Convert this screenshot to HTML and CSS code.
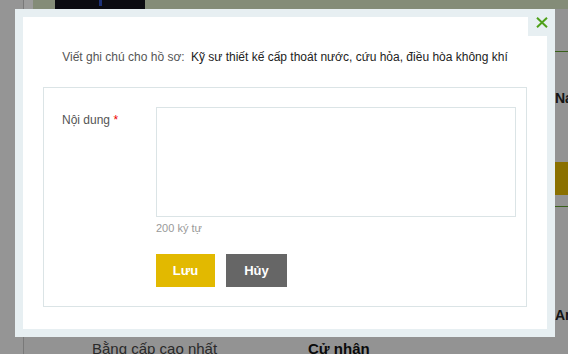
FILE: index.html
```html
<!DOCTYPE html>
<html lang="vi">
<head>
    <meta charset="UTF-8">
    <meta name="viewport" content="width=device-width, initial-scale=1.0">
    <title>Viết ghi chú cho hồ sơ</title>
    <link rel="stylesheet" href="styles.css">
</head>
<body>
    <div class="page">
        <aside class="sidebar"></aside>
        <div class="main">
            <div class="hero">
                <div class="avatar"><span class="avatar-dot"></span></div>
            </div>
            <div class="profile">
                <div class="profile-left">
                    <div class="info-row">
                        <span class="info-label">Bằng cấp cao nhất</span>
                        <span class="info-value">Cử nhân</span>
                    </div>
                </div>
                <div class="profile-right">
                    <div class="rule rule-top"></div>
                    <div class="side-name">Nam</div>
                    <div class="side-btn"></div>
                    <div class="rule"></div>
                    <div class="side-name side-bottom">Anh</div>
                </div>
            </div>
        </div>
    </div>

    <div class="overlay"></div>

    <div class="modal">
        <button class="modal-close" type="button" aria-label="Đóng">
            <svg width="12" height="11" viewBox="0 0 12 11">
                <path d="M1 0.8 L11 10.2 M11 0.8 L1 10.2" stroke="currentColor" stroke-width="2" fill="none"/>
            </svg>
        </button>
        <p class="modal-title">
            <span class="modal-label">Viết ghi chú cho hồ sơ:</span>
            <span class="modal-job">Kỹ sư thiết kế cấp thoát nước, cứu hỏa, điều hòa không khí</span>
        </p>
        <form class="note-form">
            <label class="note-label" for="note">Nội dung <span class="req">*</span></label>
            <div class="note-field">
                <textarea id="note" class="note-input"></textarea>
                <div class="note-hint">200 ký tự</div>
                <div class="note-actions">
                    <button type="button" class="btn btn-save">Lưu</button>
                    <button type="button" class="btn btn-cancel">Hủy</button>
                </div>
            </div>
        </form>
    </div>
</body>
</html>
```

FILE: styles.css
```css
body, html {
    margin: 0;
    padding: 0;
    height: 100%;
    overflow: hidden;
    font-family: "Liberation Sans", Arial, sans-serif;
}

.page {
    display: flex;
    height: 100%;
    background: #f2f2f2;
}

.sidebar {
    flex-shrink: 0;
    width: 23px;
    background: #f0f0f0;
    border-right: 1px solid #c4c4c4;
}

.main {
    flex: 1;
    min-width: 0;
    display: flex;
    flex-direction: column;
    background: #fcfcfc;
}

.hero {
    height: 9px;
    margin-left: 9px;
    padding-left: 22px;
    background: #d6e2c2;
}

.avatar {
    width: 90px;
    height: 9px;
    background: #12121c;
    display: flex;
    justify-content: center;
}

.avatar-dot {
    width: 3px;
    height: 6px;
    background: #3050c0;
}

.profile {
    flex: 1;
    display: grid;
    grid-template-columns: 500px minmax(0, 1fr);
    padding-left: 31px;
    background: #eeeeee;
}

.profile-left {
    display: flex;
    flex-direction: column;
    justify-content: flex-end;
}

.info-row {
    display: flex;
    height: 17px;
    padding-left: 37px;
    font-size: 15px;
    line-height: 20px;
    margin-bottom: -2px;
    white-space: nowrap;
}

.info-label {
    width: 216px;
    color: #444;
}

.info-value {
    font-weight: bold;
    color: #111;
}

.profile-right {
    display: flex;
    flex-direction: column;
    overflow: hidden;
    white-space: nowrap;
}

.rule {
    height: 1px;
    background: #5c9c2a;
}

.rule-top {
    margin-top: 42px;
}

.side-name {
    margin-top: 38px;
    font-size: 14px;
    font-weight: bold;
    color: #222;
}

.side-btn {
    height: 33px;
    margin-top: 56px;
    margin-bottom: 11px;
    background: #dfb500;
}

.side-bottom {
    margin-top: 100px;
}

.overlay {
    position: fixed;
    inset: 0;
    background: rgba(0, 0, 0, 0.38);
}

.modal {
    position: absolute;
    left: 15px;
    top: 9px;
    width: 524px;
    height: 312px;
    border: 8px solid #e7eff2;
    background: #fff;
    display: flex;
    flex-direction: column;
}

.modal-close {
    position: absolute;
    top: -8px;
    right: -8px;
    width: 27px;
    height: 27px;
    padding: 0;
    border: 0;
    background: #e7eff2;
    color: #4fa11a;
    display: flex;
    align-items: center;
    justify-content: center;
    cursor: pointer;
}

.modal-title {
    margin: 32px 0 0;
    text-align: center;
    font-size: 12px;
    line-height: 16px;
}

.modal-label {
    color: #555;
    margin-right: 3px;
}

.modal-job {
    color: #222;
}

.note-form {
    box-sizing: border-box;
    margin: 22px 20px 0;
    height: 220px;
    border: 1px solid #dbe4e6;
    padding: 19px 10px 0 18px;
    display: grid;
    grid-template-columns: 94px 1fr;
    align-items: start;
}

.note-label {
    margin-top: 6px;
    font-size: 12px;
    line-height: 14px;
    color: #555;
}

.req {
    color: #e00;
}

.note-field {
    display: flex;
    flex-direction: column;
}

.note-input {
    box-sizing: border-box;
    width: 360px;
    height: 110px;
    margin: 0;
    border: 1px solid #dbe4e6;
    resize: none;
    font-family: inherit;
}

.note-hint {
    margin-top: 4px;
    font-size: 11px;
    line-height: 14px;
    color: #999;
}

.note-actions {
    display: flex;
    gap: 11px;
    margin-top: 19px;
}

.btn {
    height: 33px;
    border: 0;
    padding: 0;
    color: #fff;
    font-family: inherit;
    font-size: 13px;
    font-weight: bold;
}

.btn-save {
    width: 59px;
    background: #e2b900;
}

.btn-cancel {
    width: 61px;
    background: #666;
}
```
